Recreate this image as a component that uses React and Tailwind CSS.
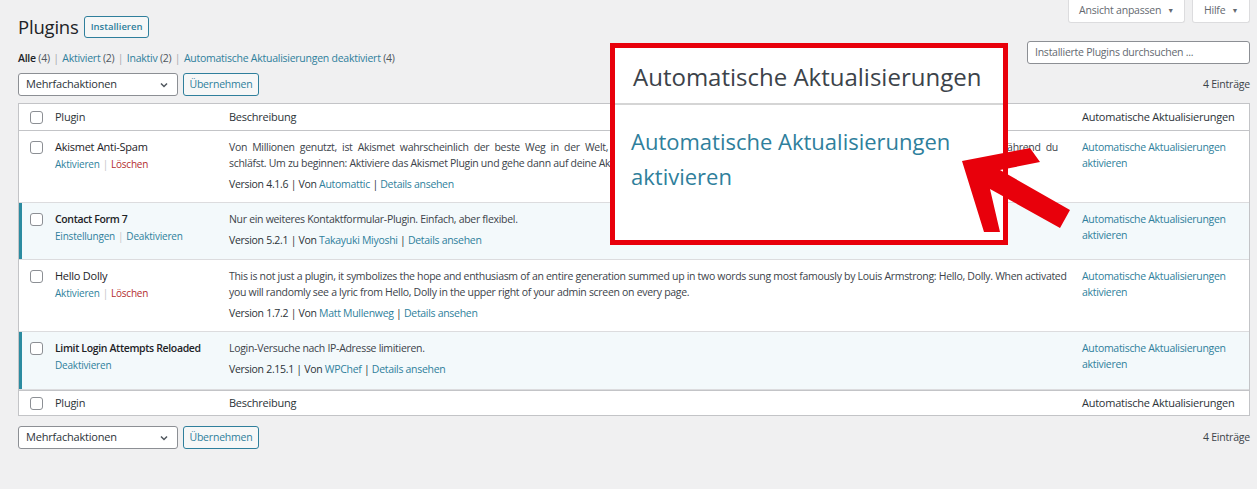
import React from 'react';

const LINK = 'text-[#2f7f9c]';

function Checkbox() {
  return <span className="block w-[13px] h-[13px] rounded-[3px] border border-[#8c8f94] bg-white" />;
}

function BulkActions() {
  return (
    <div className="flex items-center gap-[5px]">
      <div className="w-[160px] h-[23px] rounded-[3px] border border-[#8c8f94] bg-white flex items-center justify-between pl-[7px] pr-[8px] text-[11px] tracking-[-0.2px] text-[#2c3338]">
        <span>Mehrfachaktionen</span>
        <svg width="10" height="10" viewBox="0 0 10 10" fill="none" stroke="#50575e" strokeWidth="1.5"><path d="M2 3.5 L5 6.5 L8 3.5" /></svg>
      </div>
      <div className="w-[76px] h-[23px] rounded-[3px] border border-[#2f7f9c] bg-[#f6f7f7] flex items-center justify-center text-[10.5px] tracking-[-0.2px] text-[#2f7f9c]">Übernehmen</div>
    </div>
  );
}

const plugins = [
  {
    name: 'Akismet Anti-Spam',
    active: false,
    actions: [['Aktivieren', LINK], ['Löschen', 'text-[#b32d2e]']],
    desc: (
      <>
        <div className="pr-[16px] whitespace-nowrap text-justify [text-align-last:justify]">
          Von Millionen genutzt, ist Akismet wahrscheinlich der beste Weg in der Welt, <b className="font-semibold">um dein Blog vor Spam zu schützen</b>. Es schützt deine Website immer, auch während du
        </div>
        <div className="whitespace-nowrap">schläfst. Um zu beginnen: Aktiviere das Akismet Plugin und gehe dann auf deine Akismet-Einstellungsseite, um deinen API-Schlüssel einzurichten.</div>
      </>
    ),
    version: '4.1.6',
    author: 'Automattic',
    h: 'h-[72px]',
  },
  {
    name: 'Contact Form 7',
    active: true,
    actions: [['Einstellungen', LINK], ['Deaktivieren', LINK]],
    desc: 'Nur ein weiteres Kontaktformular-Plugin. Einfach, aber flexibel.',
    version: '5.2.1',
    author: 'Takayuki Miyoshi',
    h: 'h-[57px]',
  },
  {
    name: 'Hello Dolly',
    active: false,
    actions: [['Aktivieren', LINK], ['Löschen', 'text-[#b32d2e]']],
    desc: 'This is not just a plugin, it symbolizes the hope and enthusiasm of an entire generation summed up in two words sung most famously by Louis Armstrong: Hello, Dolly. When activated you will randomly see a lyric from Hello, Dolly in the upper right of your admin screen on every page.',
    version: '1.7.2',
    author: 'Matt Mullenweg',
    h: 'h-[72px]',
  },
  {
    name: 'Limit Login Attempts Reloaded',
    active: true,
    actions: [['Deaktivieren', LINK]],
    desc: 'Login-Versuche nach IP-Adresse limitieren.',
    version: '2.15.1',
    author: 'WPChef',
    h: 'h-[58px]',
  },
];

const GRID = 'grid grid-cols-[29px_174px_1fr_175px]';

function HeadRow({ bottom }) {
  return (
    <div className={`${GRID} items-center ${bottom ? 'h-[25px] border-t border-[#c3c4c7]' : 'h-[27px] border-b border-[#c3c4c7]'} text-[11px] tracking-[-0.25px] text-[#2c3338]`}>
      <div className="pl-[11px]"><Checkbox /></div>
      <div className="pl-[7px]">Plugin</div>
      <div className="pl-[7px]">Beschreibung</div>
      <div className="pl-[8px]">Automatische Aktualisierungen</div>
    </div>
  );
}

function PluginRow({ p }) {
  return (
    <div className={`${GRID} ${p.h} border-b border-[#dcdcde] ${p.active ? 'bg-[#f3f9fb] shadow-[inset_3px_0_0_#2b8ba0]' : 'bg-white'} pt-[8px] leading-[16px]`}>
      <div className="pl-[11px] pt-[2px]"><Checkbox /></div>
      <div className="pl-[7px]">
        <div className={`whitespace-nowrap text-[#1d2327] ${p.active ? 'font-semibold text-[10.5px] tracking-[-0.35px]' : 'text-[11px] tracking-[-0.25px]'}`}>{p.name}</div>
        <div className="mt-[1px] text-[10px] tracking-[-0.2px]">
          {p.actions.map(([label, cls], i) => (
            <span key={label}>
              {i > 0 && <span className="text-[#c3c4c7] mx-[3px]">|</span>}
              <span className={cls}>{label}</span>
            </span>
          ))}
        </div>
      </div>
      <div className="pl-[7px] text-[10.5px] tracking-[-0.3px]">
        <div>{p.desc}</div>
        <p className="mt-[5px] text-[#2c3338]">
          Version {p.version} | Von <span className={LINK}>{p.author}</span> | <span className={LINK}>Details ansehen</span>
        </p>
      </div>
      <div className={`pl-[8px] text-[10.5px] tracking-[-0.3px] ${LINK}`}>Automatische Aktualisierungen<br />aktivieren</div>
    </div>
  );
}

export default function App() {
  return (
    <div className="relative min-h-[489px] bg-[#f0f0f1] px-[18px] pr-[7px] font-['Open_Sans',sans-serif] text-[#3c434a] overflow-hidden">
      <div className="flex justify-between items-start">
        <div className="pt-[16px]">
          <div className="flex items-center gap-[5px] h-[22px]">
            <h1 className="text-[18.5px] tracking-[-0.2px] text-[#1d2327]">Plugins</h1>
            <span className="h-[22px] px-[6px] rounded-[3px] border border-[#2f7f9c] bg-[#f6f7f7] flex items-center text-[9.5px] font-semibold text-[#2f7f9c]">Installieren</span>
          </div>
          <div className="mt-[13px] leading-[14px] text-[10.5px] tracking-[-0.25px] text-[#50575e]">
            <b className="font-semibold text-[#1d2327]">Alle</b> (4) <span className="mx-[1px] text-[#a7aaad]">|</span> <span className={LINK}>Aktiviert</span> (2) <span className="mx-[1px] text-[#a7aaad]">|</span> <span className={LINK}>Inaktiv</span> (2) <span className="mx-[1px] text-[#a7aaad]">|</span> <span className={LINK}>Automatische Aktualisierungen deaktiviert</span> (4)
          </div>
          <div className="mt-[8px]"><BulkActions /></div>
        </div>
        <div className="flex flex-col items-end">
          <div className="flex gap-[7px]">
            <div className="h-[23px] w-[117px] bg-white border border-t-0 border-[#dcdcde] rounded-b-[3px] flex items-center justify-center gap-[6px] text-[10.5px] tracking-[-0.2px] text-[#646970]">Ansicht anpassen <span className="text-[7px]">▼</span></div>
            <div className="h-[23px] w-[58px] bg-white border border-t-0 border-[#dcdcde] rounded-b-[3px] flex items-center justify-center gap-[6px] text-[10.5px] tracking-[-0.2px] text-[#646970]">Hilfe <span className="text-[7px]">▼</span></div>
          </div>
          <div className="mt-[18px] w-[223px] h-[23px] rounded-[3px] border border-[#8c8f94] bg-white flex items-center px-[7px] text-[10.5px] tracking-[-0.25px] text-[#646970]">Installierte Plugins durchsuchen ...</div>
          <div className="mt-[13px] leading-[14px] text-[10.5px] tracking-[-0.2px] text-[#3c434a]">4 Einträge</div>
        </div>
      </div>

      <div className="mt-[7px] border border-[#c3c4c7] bg-white">
        <HeadRow />
        {plugins.map((p) => <PluginRow key={p.name} p={p} />)}
        <HeadRow bottom />
      </div>

      <div className="mt-[10px] flex items-center justify-between">
        <BulkActions />
        <span className="text-[10.5px] tracking-[-0.2px]">4 Einträge</span>
      </div>

      {/* Annotation: zoomed callout + arrow */}
      <div className="absolute left-[610px] top-[43px] w-[398px] h-[202px] border-[5px] border-[#e8000b] bg-white flex flex-col">
        <div className="h-[57px] shrink-0 flex items-center pl-[18px] pt-[2px] border-b-2 border-[#d5d5d5] text-[24px] text-[#3c434a]">Automatische Aktualisierungen</div>
        <div className="pl-[16px] pt-[19px] text-[22px] leading-[35px] text-[#2f7f9c]">Automatische Aktualisierungen<br />aktivieren</div>
      </div>
      <svg className="absolute left-0 top-0" width="1257" height="489" style={{ pointerEvents: 'none' }}>
        <polygon points="962,161 1030,148 1040,162 1000,170 1070,210 1060,228 990,189 1000,232 984,232" fill="#e8000b" />
      </svg>
    </div>
  );
}
